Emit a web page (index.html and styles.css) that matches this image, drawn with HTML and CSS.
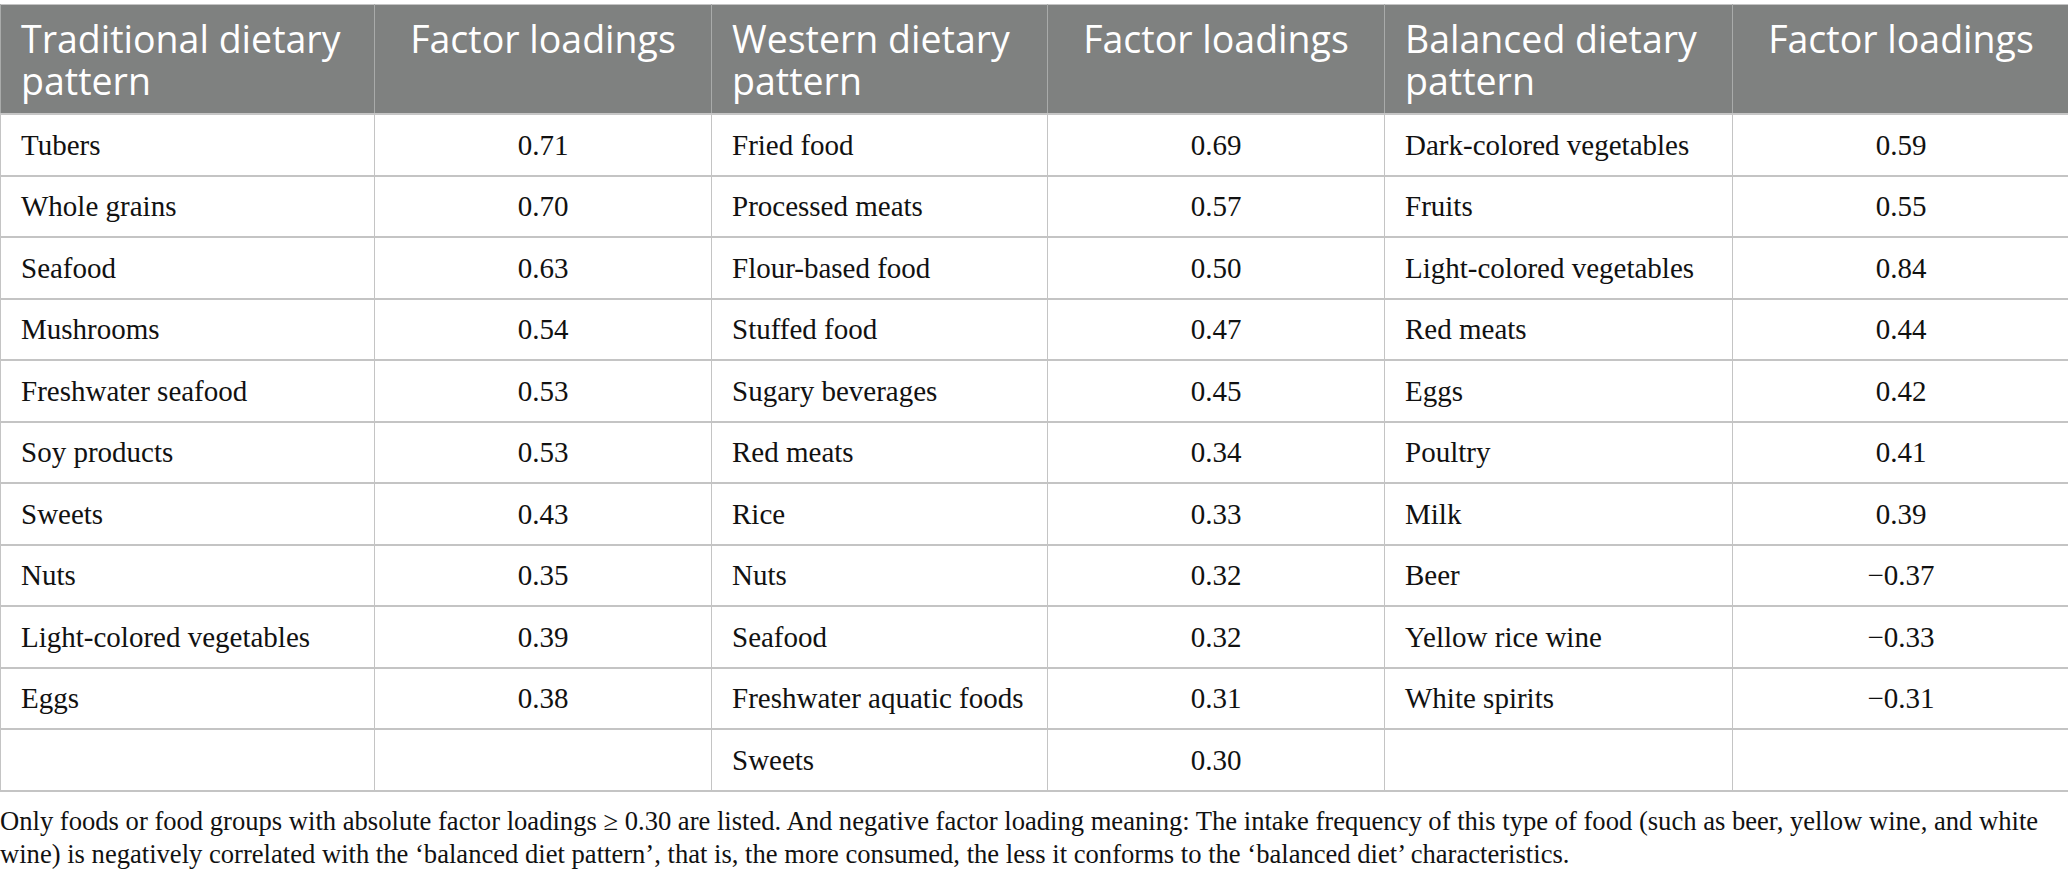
FILE: index.html
```html
<!DOCTYPE html>
<html lang="en">
<head>
<meta charset="utf-8">
<title>Factor loadings of dietary patterns</title>
<link rel="stylesheet" href="styles.css">
</head>
<body>
<div class="wrap">
<table class="loadings">
  <colgroup>
    <col class="c-name1">
    <col class="c-val">
    <col class="c-name">
    <col class="c-val">
    <col class="c-name3">
    <col class="c-val">
  </colgroup>
  <thead>
    <tr>
      <th class="name">Traditional dietary pattern</th>
      <th class="val">Factor loadings</th>
      <th class="name">Western dietary pattern</th>
      <th class="val">Factor loadings</th>
      <th class="name">Balanced dietary pattern</th>
      <th class="val">Factor loadings</th>
    </tr>
  </thead>
  <tbody>
    <tr><td>Tubers</td><td class="num">0.71</td><td>Fried food</td><td class="num">0.69</td><td>Dark-colored vegetables</td><td class="num">0.59</td></tr>
    <tr><td>Whole grains</td><td class="num">0.70</td><td>Processed meats</td><td class="num">0.57</td><td>Fruits</td><td class="num">0.55</td></tr>
    <tr><td>Seafood</td><td class="num">0.63</td><td>Flour-based food</td><td class="num">0.50</td><td>Light-colored vegetables</td><td class="num">0.84</td></tr>
    <tr><td>Mushrooms</td><td class="num">0.54</td><td>Stuffed food</td><td class="num">0.47</td><td>Red meats</td><td class="num">0.44</td></tr>
    <tr><td>Freshwater seafood</td><td class="num">0.53</td><td>Sugary beverages</td><td class="num">0.45</td><td>Eggs</td><td class="num">0.42</td></tr>
    <tr><td>Soy products</td><td class="num">0.53</td><td>Red meats</td><td class="num">0.34</td><td>Poultry</td><td class="num">0.41</td></tr>
    <tr><td>Sweets</td><td class="num">0.43</td><td>Rice</td><td class="num">0.33</td><td>Milk</td><td class="num">0.39</td></tr>
    <tr><td>Nuts</td><td class="num">0.35</td><td>Nuts</td><td class="num">0.32</td><td>Beer</td><td class="num">−0.37</td></tr>
    <tr><td>Light-colored vegetables</td><td class="num">0.39</td><td>Seafood</td><td class="num">0.32</td><td>Yellow rice wine</td><td class="num">−0.33</td></tr>
    <tr><td>Eggs</td><td class="num">0.38</td><td>Freshwater aquatic foods</td><td class="num">0.31</td><td>White spirits</td><td class="num">−0.31</td></tr>
    <tr><td></td><td class="num"></td><td>Sweets</td><td class="num">0.30</td><td></td><td class="num"></td></tr>
  </tbody>
</table>
<p class="note">Only foods or food groups with absolute factor loadings ≥ 0.30 are listed. And negative factor loading meaning: The intake frequency of this type of food (such as beer, yellow wine, and white wine) is negatively correlated with the ‘balanced diet pattern’, that is, the more consumed, the less it conforms to the ‘balanced diet’ characteristics.</p>
</div>
</body>
</html>
```

FILE: styles.css
```css
html, body {
  margin: 0;
  padding: 0;
  background: #ffffff;
}

.wrap {
  width: 2068px;
  padding-top: 4px;
}

.loadings {
  width: 2068px;
  table-layout: fixed;
  border-collapse: collapse;
  border: 1px solid #c4c4c4;
}

.c-name1 { width: 374px; }
.c-val { width: 337px; }
.c-name { width: 336px; }
.c-name3 { width: 348px; }

.loadings th {
  background: #7f8180;
  color: #ffffff;
  font-family: "Open Sans", "Noto Sans", sans-serif;
  font-weight: 400;
  font-size: 37.5px;
  line-height: 42px;
  text-align: left;
  vertical-align: top;
  padding: 13px 20px 11px;
  border-left: 1px solid #a9abaa;
  border-bottom: 2px solid #c6c6c6;
}

.loadings th.val {
  text-align: center;
}

.loadings td {
  font-family: "Liberation Serif", "Times New Roman", serif;
  font-size: 29px;
  color: #111111;
  height: 59.5px;
  padding: 0 20px;
  line-height: 32px;
  vertical-align: middle;
  border: 1px solid #c4c4c4;
  border-bottom-width: 2px;
}

.loadings td.num {
  text-align: center;
}

.note {
  margin: 13px 0 0;
  font-family: "Liberation Serif", "Times New Roman", serif;
  font-size: 26.6px;
  line-height: 33px;
  color: #111111;
}
```
